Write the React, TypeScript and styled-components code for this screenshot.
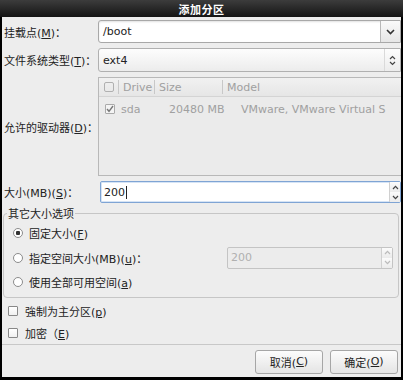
import React from "react";
import styled, { createGlobalStyle } from "styled-components";

const GlobalStyle = createGlobalStyle`
  html, body {
    margin: 0;
    padding: 0;
    background: #000;
  }
  body {
    font-family: "DejaVu Sans", "Noto Sans CJK SC", sans-serif;
    font-size: 11px;
    color: #222;
  }
`;

const ChevronDown = () => (
  <svg width="9" height="6" viewBox="0 0 9 6">
    <path d="M1 1 L4.5 4.5 L8 1" fill="none" stroke="#333" strokeWidth="1.6" />
  </svg>
);

const UpDown = ({ color = "#444" }: { color?: string }) => (
  <svg width="7" height="11" viewBox="0 0 7 11">
    <path d="M1 4 L3.5 1.5 L6 4 M1 7 L3.5 9.5 L6 7" fill="none" stroke={color} strokeWidth="1.2" />
  </svg>
);

const Up = ({ color = "#444" }: { color?: string }) => (
  <svg width="7" height="5" viewBox="0 0 7 5">
    <path d="M1 4 L3.5 1.3 L6 4" fill="none" stroke={color} strokeWidth="1.2" />
  </svg>
);

const Down = ({ color = "#444" }: { color?: string }) => (
  <svg width="7" height="5" viewBox="0 0 7 5">
    <path d="M1 1 L3.5 3.7 L6 1" fill="none" stroke={color} strokeWidth="1.2" />
  </svg>
);

const Tick = () => (
  <svg width="8" height="8" viewBox="0 0 8 8">
    <path d="M1 4 L3 6.3 L7 1" fill="none" stroke="#777" strokeWidth="1.4" />
  </svg>
);

export default function App() {
  return (
    <>
      <GlobalStyle />
      <Window>
        <TitleBar>添加分区</TitleBar>
        <Body>
          <FormGrid>
            <Label>
              挂载点(<u>M</u>)：
            </Label>
            <Combo>
              <EntryText>/boot</EntryText>
              <ComboButton>
                <ChevronDown />
              </ComboButton>
            </Combo>

            <Label>
              文件系统类型(<u>T</u>)：
            </Label>
            <SelectBox>
              <EntryText>ext4</EntryText>
              <SelectArrows>
                <UpDown />
              </SelectArrows>
            </SelectBox>

            <Label>
              允许的驱动器(<u>D</u>)：
            </Label>
            <DriveList>
              <DriveHeader>
                <HeadCell w={20}>
                  <HeadCircle />
                </HeadCell>
                <HeadCell w={36}>Drive</HeadCell>
                <HeadCell w={68}>Size</HeadCell>
                <HeadCell w={180} last>
                  Model
                </HeadCell>
              </DriveHeader>
              <DriveRow>
                <RowCell w={22} pad={6}>
                  <CheckBox dim>
                    <Tick />
                  </CheckBox>
                </RowCell>
                <RowCell w={48}>sda</RowCell>
                <RowCell w={72}>20480 MB</RowCell>
                <RowCell w={170}>VMware, VMware Virtual S</RowCell>
              </DriveRow>
            </DriveList>

            <Label>
              大小(MB)(<u>S</u>)：
            </Label>
            <Spin focused>
              <SpinText>
                200<Caret />
              </SpinText>
              <SpinButtons>
                <SpinBtn>
                  <Up />
                </SpinBtn>
                <SpinBtn>
                  <Down />
                </SpinBtn>
              </SpinButtons>
            </Spin>
          </FormGrid>

          <Frame>
            <Legend>其它大小选项</Legend>
            <OptionRow>
              <Radio checked />
              <span>
                固定大小(<u>F</u>)
              </span>
            </OptionRow>
            <OptionRow>
              <Radio />
              <span>
                指定空间大小(MB)(<u>u</u>)：
              </span>
              <Spin disabled>
                <SpinText>200</SpinText>
                <SpinButtons>
                  <SpinBtn>
                    <Up color="#bbb" />
                  </SpinBtn>
                  <SpinBtn>
                    <Down color="#bbb" />
                  </SpinBtn>
                </SpinButtons>
              </Spin>
            </OptionRow>
            <OptionRow>
              <Radio />
              <span>
                使用全部可用空间(<u>a</u>)
              </span>
            </OptionRow>
          </Frame>

          <CheckList>
            <CheckRow>
              <CheckBox />
              <span>
                強制为主分区(<u>p</u>)
              </span>
            </CheckRow>
            <CheckRow>
              <CheckBox />
              <span>
                加密（<u>E</u>)
              </span>
            </CheckRow>
          </CheckList>

          <Separator />

          <ButtonRow>
            <Button>
              取消(<u>C</u>)
            </Button>
            <Button>
              确定(<u>O</u>)
            </Button>
          </ButtonRow>
        </Body>
      </Window>
    </>
  );
}

const Window = styled.div`
  width: 403px;
  height: 380px;
  display: flex;
  flex-direction: column;
  background: #000;
  overflow: hidden;
`;

const TitleBar = styled.div`
  height: 17px;
  flex: none;
  display: flex;
  align-items: center;
  justify-content: center;
  background: linear-gradient(#3c3c3c, #141414);
  color: #fff;
  font-weight: bold;
  font-size: 11px;
  letter-spacing: 0.5px;
`;

const Body = styled.div`
  flex: 1;
  margin: 0 2px 3px 2px;
  background: #ededed;
  padding-top: 3px;
  display: flex;
  flex-direction: column;
  overflow: hidden;
`;

const FormGrid = styled.div`
  display: grid;
  grid-template-columns: 95px minmax(0, 1fr);
  grid-template-rows: 23px 24px 99px 22px;
  row-gap: 5px;
  align-items: center;
`;

const Label = styled.div`
  padding-left: 2px;
  white-space: nowrap;
  color: #222;
`;

const Combo = styled.div`
  height: 23px;
  display: flex;
  border: 1px solid #a8a8a8;
  border-radius: 3px 0 0 3px;
  background: #fff;
  box-shadow: inset 0 1px 2px rgba(0, 0, 0, 0.12);
  box-sizing: border-box;
  margin-left: 1px;
`;

const EntryText = styled.div`
  flex: 1;
  display: flex;
  align-items: center;
  padding-left: 4px;
  color: #222;
`;

const ComboButton = styled.div`
  width: 19px;
  display: flex;
  align-items: center;
  justify-content: center;
  border-left: 1px solid #b8b8b8;
  background: linear-gradient(#fafafa, #e6e6e6);
`;

const SelectBox = styled.div`
  height: 24px;
  display: flex;
  box-sizing: border-box;
  border: 1px solid #b0b0b0;
  border-radius: 3px 0 0 3px;
  background: linear-gradient(#fdfdfd, #ececec);
  margin-left: 1px;
`;

const SelectArrows = styled.div`
  width: 15px;
  display: flex;
  align-items: center;
  justify-content: center;
  border-left: 1px solid #dadada;
`;

const DriveList = styled.div`
  align-self: stretch;
  box-sizing: border-box;
  border: 1px solid #b8b8b8;
  border-right: none;
  background: #ebebeb;
  color: #a0a0a0;
  margin-left: 1px;
  overflow: hidden;
`;

const DriveHeader = styled.div`
  height: 18px;
  display: flex;
  align-items: center;
  background: linear-gradient(#f1f1f1, #e6e6e6);
  border-bottom: 1px solid #d4d4d4;
`;

const HeadCell = styled.div<{ w: number; last?: boolean }>`
  width: ${(p) => p.w}px;
  flex: none;
  height: 14px;
  display: flex;
  align-items: center;
  padding-left: 4px;
  box-sizing: border-box;
  border-right: ${(p) => (p.last ? "none" : "1px solid #c8c8c8")};
  white-space: nowrap;
`;

const HeadCircle = styled.div`
  width: 8px;
  height: 8px;
  border: 1px solid #b0b0b0;
  border-radius: 2px;
  margin-left: 1px;
`;

const DriveRow = styled.div`
  height: 22px;
  display: flex;
  align-items: center;
  margin-top: 1px;
`;

const RowCell = styled.div<{ w: number; pad?: number }>`
  width: ${(p) => p.w}px;
  flex: none;
  box-sizing: border-box;
  padding-left: ${(p) => p.pad ?? 0}px;
  display: flex;
  align-items: center;
  white-space: nowrap;
`;

const Spin = styled.div<{ focused?: boolean; disabled?: boolean }>`
  height: 22px;
  display: flex;
  flex: none;
  box-sizing: border-box;
  border: 1px solid ${(p) => (p.focused ? "#7fa4d4" : p.disabled ? "#c4c4c4" : "#aaa")};
  border-radius: 2px;
  background: ${(p) => (p.disabled ? "#ececec" : "#fff")};
  color: ${(p) => (p.disabled ? "#b0b0b0" : "#222")};
  box-shadow: ${(p) => (p.focused ? "inset 0 0 0 1px #d6e4f5" : "none")};
  margin-left: ${(p) => (p.disabled ? "auto" : "3px")};
  width: ${(p) => (p.disabled ? "166px" : "auto")};
`;

const SpinText = styled.div`
  flex: 1;
  display: flex;
  align-items: center;
  padding-left: 3px;
`;

const Caret = styled.span`
  display: inline-block;
  width: 1px;
  height: 13px;
  background: #222;
  margin-left: 1px;
`;

const SpinButtons = styled.div`
  width: 10px;
  display: flex;
  flex-direction: column;
  border-left: 1px solid #d0d0d0;
`;

const SpinBtn = styled.div`
  flex: 1;
  display: flex;
  align-items: center;
  justify-content: center;
  background: linear-gradient(#fbfbfb, #ebebeb);
`;

const Frame = styled.fieldset`
  margin: 2px 2px 0 1px;
  padding: 0 5px 2px 9px;
  border: 1px solid #c6c6c6;
  border-radius: 4px;
  min-width: 0;
`;

const Legend = styled.legend`
  padding: 0 1px;
  margin-left: -6px;
  color: #222;
`;

const OptionRow = styled.div`
  height: 24.5px;
  display: flex;
  align-items: center;
  gap: 6px;
  white-space: nowrap;
`;

const Radio = styled.div<{ checked?: boolean }>`
  width: 10px;
  height: 10px;
  flex: none;
  box-sizing: border-box;
  border: 1px solid #8c8c8c;
  border-radius: 50%;
  background: radial-gradient(circle, ${(p) => (p.checked ? "#333 0 2px" : "#fff 0 2px")}, #fff 2.5px);
`;

const CheckList = styled.div`
  display: flex;
  flex-direction: column;
  margin-top: 2px;
`;

const CheckRow = styled.div`
  height: 22px;
  display: flex;
  align-items: center;
  gap: 7px;
  padding-left: 6px;
`;

const CheckBox = styled.div<{ dim?: boolean }>`
  width: 10px;
  height: 10px;
  flex: none;
  box-sizing: border-box;
  border: 1px solid ${(p) => (p.dim ? "#aaa" : "#888")};
  border-radius: 1px;
  background: ${(p) => (p.dim ? "#f4f4f4" : "linear-gradient(#fff, #f0f0f0)")};
  display: flex;
  align-items: center;
  justify-content: center;
`;

const Separator = styled.div`
  height: 1px;
  background: #c8c8c8;
`;

const ButtonRow = styled.div`
  display: flex;
  justify-content: flex-end;
  gap: 7px;
  padding: 5px 3px 0 0;
`;

const Button = styled.div`
  width: 68px;
  height: 24px;
  box-sizing: border-box;
  display: flex;
  align-items: center;
  justify-content: center;
  border: 1px solid #a6a6a6;
  border-radius: 3px;
  background: linear-gradient(#fcfcfc, #e4e4e4);
  color: #222;
`;
